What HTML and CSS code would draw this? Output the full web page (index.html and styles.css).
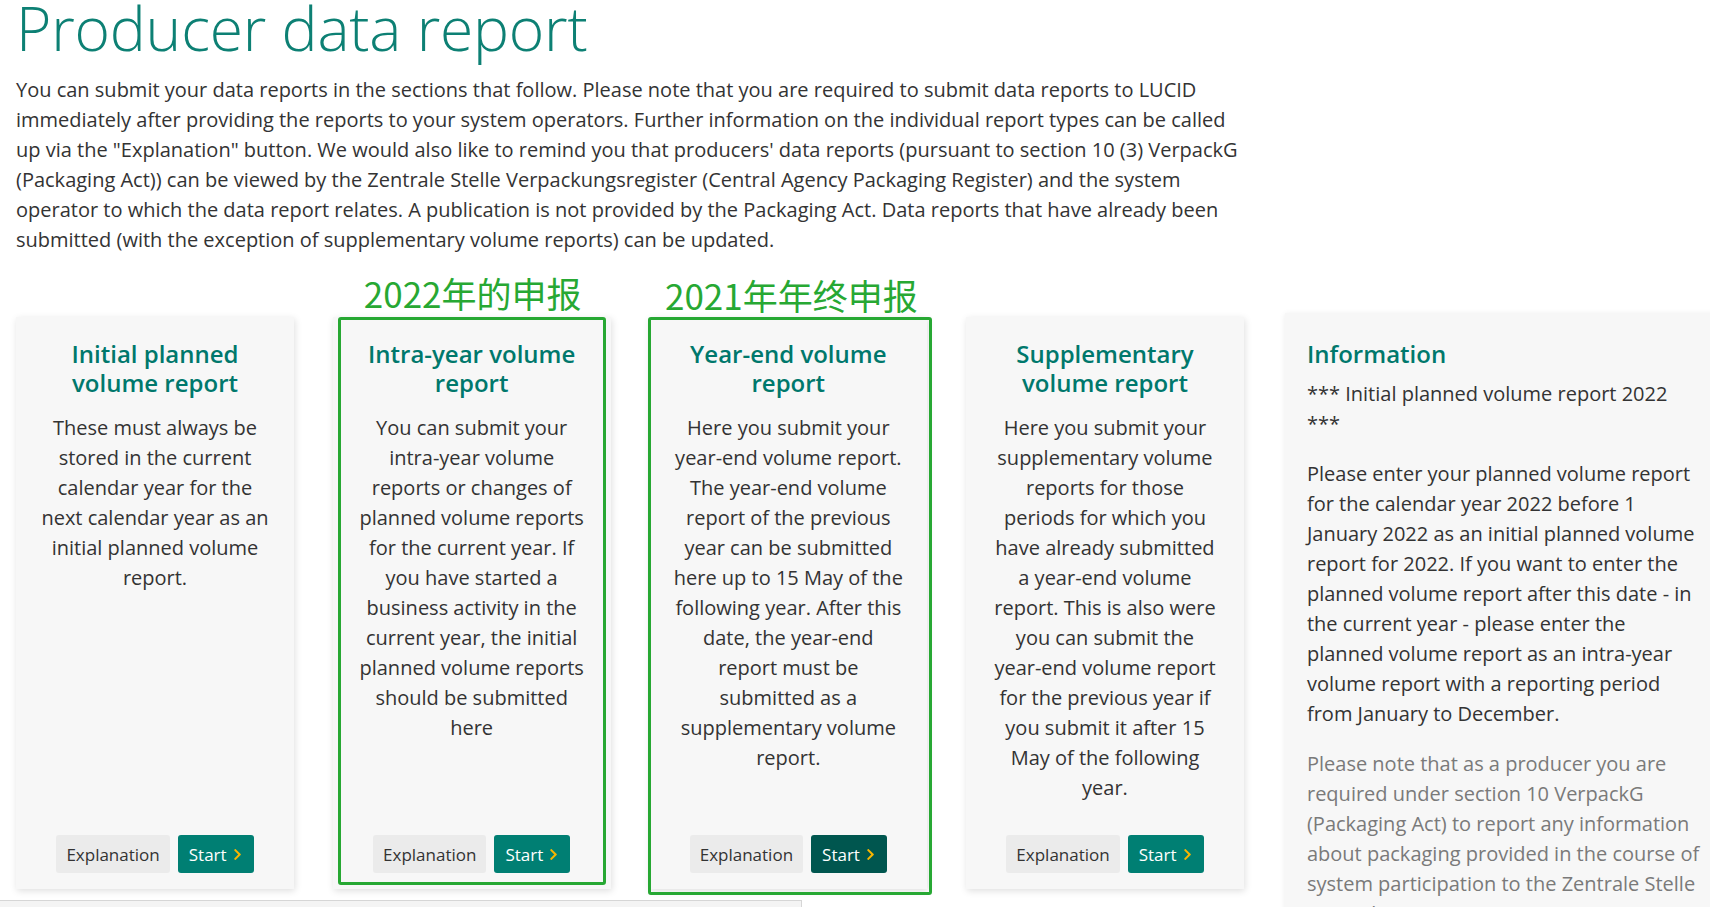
FILE: index.html
```html
<!DOCTYPE html>
<html lang="en">
<head>
<meta charset="utf-8">
<title>Producer data report</title>
<link rel="stylesheet" href="styles.css">
</head>
<body>
<div class="page">
  <h1 class="title">Producer data report</h1>
  <p class="intro">You can submit your data reports in the sections that follow. Please note that you are required to submit data reports to LUCID immediately after providing the reports to your system operators. Further information on the individual report types can be called up via the "Explanation" button. We would also like to remind you that producers' data reports (pursuant to section 10 (3) VerpackG (Packaging Act)) can be viewed by the Zentrale Stelle Verpackungsregister (Central Agency Packaging Register) and the system operator to which the data report relates. A publication is not provided by the Packaging Act. Data reports that have already been submitted (with the exception of supplementary volume reports) can be updated.</p>

  <div class="row">
    <div class="cards">
      <section class="card">
        <h3 class="card-title">Initial planned volume report</h3>
        <p class="card-text">These must always be stored in the current calendar year for the next calendar year as an initial planned volume report.</p>
        <div class="actions">
          <span class="btn btn-light">Explanation</span>
          <span class="btn btn-start">Start<svg class="chev" width="9" height="13" viewBox="0 0 320 512"><path fill="#f7b500" d="M285.5 273L91.1 467.3c-9.4 9.4-24.6 9.4-33.9 0l-22.7-22.7c-9.4-9.4-9.4-24.5 0-33.9L188.5 256 34.5 101.3c-9.3-9.4-9.3-24.5 0-33.9l22.7-22.7c9.4-9.4 24.6-9.4 33.9 0L285.5 239c9.4 9.4 9.4 24.6 0 34z"/></svg></span>
        </div>
      </section>

      <section class="card">
        <div class="mark mark-a"></div>
        <div class="mark-label label-a">2022年的申报</div>
        <h3 class="card-title">Intra-year volume report</h3>
        <p class="card-text">You can submit your intra-year volume reports or changes of planned volume reports for the current year. If you have started a business activity in the current year, the initial planned volume reports should be submitted here</p>
        <div class="actions">
          <span class="btn btn-light">Explanation</span>
          <span class="btn btn-start">Start<svg class="chev" width="9" height="13" viewBox="0 0 320 512"><path fill="#f7b500" d="M285.5 273L91.1 467.3c-9.4 9.4-24.6 9.4-33.9 0l-22.7-22.7c-9.4-9.4-9.4-24.5 0-33.9L188.5 256 34.5 101.3c-9.3-9.4-9.3-24.5 0-33.9l22.7-22.7c9.4-9.4 24.6-9.4 33.9 0L285.5 239c9.4 9.4 9.4 24.6 0 34z"/></svg></span>
        </div>
      </section>

      <section class="card">
        <div class="mark mark-b"></div>
        <div class="mark-label label-b">2021年年终申报</div>
        <h3 class="card-title">Year-end volume report</h3>
        <p class="card-text">Here you submit your year-end volume report. The year-end volume report of the previous year can be submitted here up to 15 May of the following year. After this date, the year-end report must be submitted as a supplementary volume report.</p>
        <div class="actions">
          <span class="btn btn-light">Explanation</span>
          <span class="btn btn-start btn-start-dark">Start<svg class="chev" width="9" height="13" viewBox="0 0 320 512"><path fill="#f7b500" d="M285.5 273L91.1 467.3c-9.4 9.4-24.6 9.4-33.9 0l-22.7-22.7c-9.4-9.4-9.4-24.5 0-33.9L188.5 256 34.5 101.3c-9.3-9.4-9.3-24.5 0-33.9l22.7-22.7c9.4-9.4 24.6-9.4 33.9 0L285.5 239c9.4 9.4 9.4 24.6 0 34z"/></svg></span>
        </div>
      </section>

      <section class="card">
        <h3 class="card-title">Supplementary volume report</h3>
        <p class="card-text">Here you submit your supplementary volume reports for those periods for which you have already submitted a year-end volume report. This is also were you can submit the year-end volume report for the previous year if you submit it after 15 May of the following year.</p>
        <div class="actions">
          <span class="btn btn-light">Explanation</span>
          <span class="btn btn-start">Start<svg class="chev" width="9" height="13" viewBox="0 0 320 512"><path fill="#f7b500" d="M285.5 273L91.1 467.3c-9.4 9.4-24.6 9.4-33.9 0l-22.7-22.7c-9.4-9.4-9.4-24.5 0-33.9L188.5 256 34.5 101.3c-9.3-9.4-9.3-24.5 0-33.9l22.7-22.7c9.4-9.4 24.6-9.4 33.9 0L285.5 239c9.4 9.4 9.4 24.6 0 34z"/></svg></span>
        </div>
      </section>
    </div>

    <aside class="info">
      <h3 class="info-title">Information</h3>
      <p class="info-text">*** Initial planned volume report 2022 ***</p>
      <p class="info-text">Please enter your planned volume report for the calendar year 2022 before 1 January 2022 as an initial planned volume report for 2022. If you want to enter the planned volume report after this date - in the current year - please enter the planned volume report as an intra-year volume report with a reporting period from January to December.</p>
      <p class="info-text info-muted">Please note that as a producer you are required under section 10 VerpackG (Packaging Act) to report any information about packaging provided in the course of system participation to the Zentrale Stelle Verpackungsregister.</p>
    </aside>
  </div>
</div>
<div class="statusbar"><span>https://lucid.verpackungsregister.org/Producer/DataReport/Explanation</span></div>
</body>
</html>
```

FILE: styles.css
```css
html, body {
  margin: 0;
  padding: 0;
  overflow: hidden;
  background: #ffffff;
}

body {
  font-family: "Open Sans", "Noto Sans", sans-serif;
  color: #333333;
  width: 1710px;
  height: 907px;
}

.page {
  padding-left: 16px;
  width: 1740px;
}

.title {
  margin: 0;
  font-size: 60.5px;
  line-height: 56px;
  font-weight: 300;
  color: #0d8074;
  letter-spacing: -0.2px;
}

.intro {
  margin: 19px 0 0;
  width: 1228px;
  font-size: 20px;
  line-height: 30px;
  color: #333333;
}

.row {
  display: flex;
  align-items: flex-start;
  gap: 41px;
  margin-top: 58px;
}

.cards {
  display: grid;
  grid-template-columns: repeat(4, 278px);
  column-gap: 38.67px;
  margin-top: 4px;
  flex-shrink: 0;
}

.card {
  position: relative;
  box-sizing: border-box;
  height: 572px;
  padding: 23px 23.9px 16px;
  background: #f7f7f7;
  box-shadow: 1px 2px 7px rgba(0, 0, 0, 0.13);
  display: flex;
  flex-direction: column;
  text-align: center;
}

.card-title {
  margin: 0 0 15px;
  font-size: 24px;
  line-height: 28.8px;
  font-weight: 600;
  color: #00786c;
}

.card-text {
  margin: 0;
  font-size: 20px;
  line-height: 30px;
  color: #333333;
}

.actions {
  margin-top: auto;
  display: flex;
  justify-content: center;
  gap: 8px;
}

.btn {
  box-sizing: border-box;
  height: 38px;
  display: inline-flex;
  align-items: center;
  font-size: 17px;
  border-radius: 3px;
}

.btn-light {
  padding: 0 10px;
  background: #ebebeb;
  color: #333333;
}

.btn-start {
  padding: 0 12px 0 11px;
  background: #007f73;
  color: #ffffff;
  gap: 6px;
}

.btn-start-dark {
  background: #00564f;
}

.chev {
  display: block;
}

/* annotation overlays drawn on top of the screenshot */
.mark {
  position: absolute;
  border: 3px solid #27a833;
  border-radius: 3px;
  pointer-events: none;
}

.mark-a {
  top: 0;
  left: 5px;
  right: 5px;
  bottom: 4px;
}

.mark-b {
  top: 0;
  left: -1px;
  right: -5px;
  bottom: -6px;
}

.mark-label {
  position: absolute;
  top: -42px;
  left: 50%;
  transform: translateX(-50%);
  font-family: "Noto Sans CJK SC", "Noto Sans", sans-serif;
  font-size: 35px;
  line-height: 35px;
  color: #27a833;
  white-space: nowrap;
}

.label-a {
  margin-left: 1px;
}

.label-b {
  margin-left: 3px;
  top: -40px;
}

.info {
  box-sizing: border-box;
  width: 439px;
  flex-shrink: 0;
  min-height: 700px;
  padding: 27px 22px 0 22px;
  background: #f7f7f7;
  box-shadow: 0 1px 6px rgba(0, 0, 0, 0.08);
}

.info-title {
  margin: 0 0 10px;
  font-size: 24px;
  line-height: 28.8px;
  font-weight: 600;
  color: #00786c;
}

.info-text {
  margin: 0 0 20px;
  font-size: 20px;
  line-height: 30px;
  color: #333333;
}

.info-muted {
  color: #7a7a7a;
}

.statusbar {
  position: fixed;
  left: 0;
  bottom: 0;
  width: 802px;
  height: 7px;
  box-sizing: border-box;
  overflow: hidden;
  background: #f4f4f4;
  border-top: 1px solid #d6d6d6;
  border-right: 1px solid #d6d6d6;
  font-size: 14px;
  line-height: 20px;
  color: #b0b0b0;
  padding-left: 30px;
  white-space: nowrap;
}

.statusbar span {
  display: block;
  margin-top: 2px;
}
```
